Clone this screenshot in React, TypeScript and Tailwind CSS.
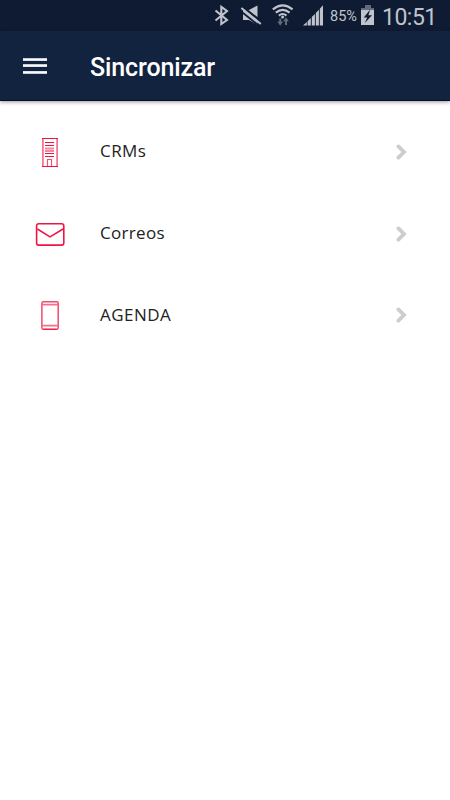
import React from 'react';

interface SyncItem {
  label: string;
  tracking: string;
  icon: React.ReactNode;
}

const BuildingIcon = () => (
  <svg width="30" height="30" viewBox="0 0 30 30" fill="none">
    <path d="M7.9 1V30M22.1 1V30" stroke="#f6708c" strokeWidth="1.7" />
    <path d="M7 1.5H23M7 29.5H23" stroke="#f0123f" strokeWidth="1.1" />
    <path d="M10 5.5H19M10 8.5H19M10 16.5H19M10 19.5H19" stroke="#f0123f" strokeWidth="1.1" />
    <path d="M10 11.5H19M10 14H19" stroke="#f6859d" strokeWidth="1.8" />
    <path d="M12.5 29V22.5H16.5V29" stroke="#f25475" strokeWidth="1.2" />
  </svg>
);

const MailIcon = () => (
  <svg width="30" height="30" viewBox="0 0 30 30" fill="none" stroke="#ef1444">
    <rect x="1.6" y="4.7" width="27.2" height="21.4" rx="2.2" strokeWidth="1.6" />
    <path d="M2.4 10L15 17.8L28 10" strokeWidth="1.5" />
  </svg>
);

const PhoneIcon = () => (
  <svg width="30" height="30" viewBox="0 0 30 30" fill="none">
    <rect x="6.9" y="1.7" width="16.3" height="27.6" rx="1.6" stroke="#f24a6d" strokeWidth="1.5" />
    <path d="M7 4.7H23M7 25.7H23" stroke="#f6708c" strokeWidth="1.7" />
    <path d="M8.5 29.3H21.5" stroke="#ef1444" />
  </svg>
);

const items: SyncItem[] = [
  { label: 'CRMs', tracking: 'tracking-[0.45px]', icon: <BuildingIcon /> },
  { label: 'Correos', tracking: 'tracking-[0.3px]', icon: <MailIcon /> },
  { label: 'AGENDA', tracking: 'tracking-[0.45px]', icon: <PhoneIcon /> },
];

const StatusBar = () => (
  <div className="flex h-[31px] bg-[#0e1b33] pl-[214px] text-[#bfc3cb]">
    <svg className="shrink-0" width="114" height="31" viewBox="214 0 114 31" fill="none" stroke="currentColor">
      {/* bluetooth */}
      <path d="M215.5 10.5L227 20L221.3 24V6.8L227 11L215.5 20.5" strokeWidth="2.1" />
      {/* muted speaker */}
      <path d="M243 10H249L257.5 5.5V25L249 20H243Z" fill="currentColor" stroke="none" />
      <path d="M241 5.6L262 22.2" stroke="#0e1b33" strokeWidth="2.4" />
      <path d="M240.6 11L260 26.6" stroke="#0e1b33" strokeWidth="1.8" />
      <path d="M241.4 8L260.8 24" strokeWidth="2" />
      {/* wifi */}
      <path d="M272.8 9.4Q282.7 1.4 292.6 9.4M275.8 12.6Q282.7 7 289.6 12.6M278.9 15.6Q282.7 12.4 286.5 15.6" strokeWidth="2.1" />
      <circle cx="282.6" cy="17" r="1.5" fill="currentColor" stroke="none" />
      <path d="M280.2 18.5V23M286 25V20" stroke="#626a7b" strokeWidth="2" />
      <path d="M277.3 21.5H283.1L280.2 25.7ZM283.1 21.3H288.9L286 17.3Z" fill="#626a7b" stroke="none" />
      {/* signal */}
      <path d="M303 25.5L306.8 22V25.5ZM307.6 21.2L310.8 18V25.5H307.6ZM311.8 17L314.9 14V25.5H311.8ZM315.8 13L318.9 9.8V25.5H315.8ZM319.8 8.8L323 5.3V25.5H319.8Z" fill="currentColor" stroke="none" />
    </svg>
    <span className="ml-[2px] mt-[7px] w-[31px] shrink-0 text-[14.5px] leading-[20px]">85%</span>
    <svg className="shrink-0" width="14" height="31" viewBox="361 0 14 31">
      <path d="M365 5H371V8H374V11H361V8H365Z" fill="#626a7b" />
      <path d="M361 10H374V25H361Z" fill="currentColor" />
      <path d="M370.2 9.5L363.8 17.4H367.2L364.8 23L372 15.2H368.4Z" fill="#0e1b33" />
    </svg>
    <span className="ml-[7px] mt-[5px] text-[23px] leading-[26px] tracking-[-0.5px]">10:51</span>
  </div>
);

const App: React.FC = () => {
  return (
    <div className="h-[800px] w-[450px] overflow-hidden bg-white font-['Roboto',sans-serif]">
      <StatusBar />
      <header className="flex h-[70px] items-center border-b border-[#080d2b] bg-[#12233f] pl-[23px] shadow-[0_1px_4px_rgba(40,10,25,0.45)]">
        <button aria-label="Menu" className="mt-px">
          <svg className="block" width="24" height="16" viewBox="0 0 24 16" fill="#f8f8fa">
            <rect y="0.2" width="24" height="2.7" />
            <rect y="6.2" width="24" height="2.7" />
            <rect y="13.1" width="24" height="2.7" />
          </svg>
        </button>
        <h1 className="ml-[43px] mt-[4px] text-[25px] font-medium leading-[32px] tracking-[-0.12px] text-white">Sincronizar</h1>
      </header>
      <ul className="pt-[10px]">
        {items.map((item) => (
          <li key={item.label} className="flex h-[81.7px] items-center pl-[35px] pr-[42.5px]">
            {item.icon}
            <span className={`-mt-px ml-[35px] flex-1 font-['Open_Sans',sans-serif] text-[17px] leading-[24px] text-[#222] ${item.tracking}`}>
              {item.label}
            </span>
            <svg width="12" height="16" viewBox="0 0 12 16" fill="none">
              <path d="M2.4 2.4L8 8L2.4 13.6" stroke="#cdcdcd" strokeWidth="3.8" strokeLinecap="round" />
            </svg>
          </li>
        ))}
      </ul>
    </div>
  );
};

export default App;
